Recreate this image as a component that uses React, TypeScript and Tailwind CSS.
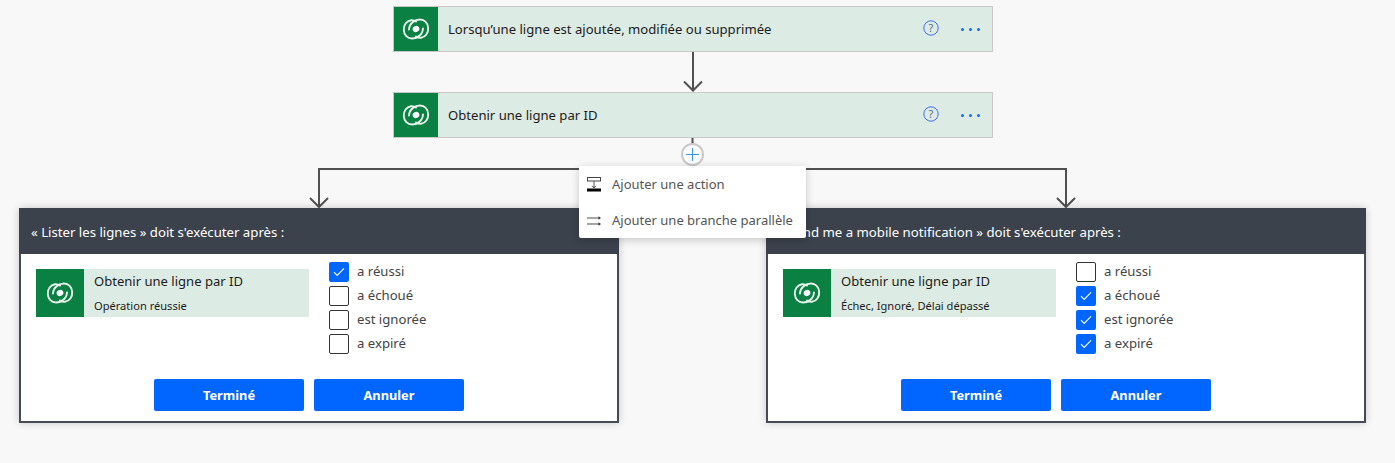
import React from "react";

const FONT = "font-['Noto_Sans','Open_Sans',sans-serif]";

function Logo() {
  return (
    <svg width="28" height="22" viewBox="0 0 28 22" fill="none">
      <path d="M14 3.600C12.500 2.400 10.800 2 9 2.200 4.500 2.800 1.500 7 1.800 12 2 17 5.500 20.500 10 20.500c4.500 0 10.500-3 11-10" stroke="#e6f4ea" strokeWidth="1.900" strokeLinecap="round" />
      <path d="M14 18.400c1.500 1.200 3.200 1.600 5 1.400 4.500-.6 7.500-4.800 7.200-9.800C26 5 22.500 1.500 18 1.500c-4.500 0-10.500 3-11 10" stroke="#e6f4ea" strokeWidth="1.900" strokeLinecap="round" />
      <ellipse cx="14" cy="11" rx="3.400" ry="3" transform="rotate(-25 14 11)" fill="#ffffff" />
    </svg>
  );
}

function FlowCard({ title }: { title: string }) {
  return (
    <div className="flex h-[46px] w-[600px] items-stretch border border-[#c8c8c8] bg-[#dcebe3]">
      <div className="flex w-[44px] items-center justify-center bg-[#0a8043]">
        <Logo />
      </div>
      <div className="flex-1 pl-[10px] text-[13.1px] leading-[44px] text-[#1c1c1c]">{title}</div>
      <svg className="mt-[12px] mr-[21px]" width="18" height="18" viewBox="0 0 18 18" fill="none">
        <circle cx="9" cy="9" r="7.200" stroke="#3f6ff0" strokeWidth="1" />
        <text x="9" y="13" textAnchor="middle" fontSize="11" fill="#5a6a9a" fontFamily="Noto Sans">?</text>
      </svg>
      <div className="mr-[12px] flex items-center gap-[5px]">
        <span className="h-[3px] w-[3px] rounded-full bg-[#0a6fe0]" />
        <span className="h-[3px] w-[3px] rounded-full bg-[#0a6fe0]" />
        <span className="h-[3px] w-[3px] rounded-full bg-[#0a6fe0]" />
      </div>
    </div>
  );
}

function Check({ checked, label }: { checked: boolean; label: string }) {
  return (
    <div className="flex h-[24px] items-center gap-[8px]">
      <div
        className={
          checked
            ? "flex h-[20px] w-[20px] items-center justify-center rounded-[2px] bg-[#0066ff]"
            : "h-[20px] w-[20px] rounded-[2px] border border-[#333333] bg-white"
        }
      >
        {checked && (
          <svg width="12" height="10" viewBox="0 0 12 10" fill="none">
            <path d="M1 5.200 4.200 8.400 11 1.400" stroke="#ffffff" strokeWidth="1.100" />
          </svg>
        )}
      </div>
      <span className="text-[13.15px] text-[#444444]">{label}</span>
    </div>
  );
}

function Panel({ title, sub, states }: { title: React.ReactNode; sub: string; states: boolean[] }) {
  const labels = ["a réussi", "a échoué", "est ignorée", "a expiré"];
  return (
    <div className="h-[215px] w-[600px] border-2 border-t-0 border-[#444b54] bg-white shadow-[0_0_8px_rgba(0,0,0,0.2)]">
      <div className="-mx-[2px] h-[46px] bg-[#3b424c] pl-[12px] text-[13.2px] leading-[49px] text-white">{title}</div>
      <div className="flex pl-[15px] pt-[6px]">
        <div className="mt-[9px] flex h-[48px] w-[273px] bg-[#dcebe3]">
          <div className="flex w-[48px] items-center justify-center bg-[#0a8043]">
            <Logo />
          </div>
          <div className="pl-[10px] pt-[2px] text-[#1c1c1c]">
            <div className="text-[13.05px] leading-[20px]">Obtenir une ligne par ID</div>
            <div className="mt-[7px] text-[11.1px] leading-[16px]">{sub}</div>
          </div>
        </div>
        <div className="ml-[20px]">
          {labels.map((l, i) => (
            <Check key={l} label={l} checked={states[i]} />
          ))}
        </div>
      </div>
      <div className="ml-[133px] mt-[23px] flex gap-[10px]">
        <button className="h-[32px] w-[150px] rounded-[2px] bg-[#0066ff] pt-[1px] text-[12.8px] font-bold text-white">Terminé</button>
        <button className="h-[32px] w-[150px] rounded-[2px] bg-[#0066ff] pt-[1px] text-[12.8px] font-bold text-white">Annuler</button>
      </div>
    </div>
  );
}

export default function App() {
  return (
    <div className={`${FONT} relative h-[463px] w-[1395px] overflow-hidden bg-[#f8f8f8] pt-[6px]`}>
      <div className="flex flex-col items-center pr-[9px]">
        <FlowCard title="Lorsqu’une ligne est ajoutée, modifiée ou supprimée" />
        <svg className="mr-[1px]" width="22" height="40" viewBox="0 0 22 40" fill="none">
          <path d="M11 0V38M2 29.500l9 9 9-9" stroke="#505050" strokeWidth="2" />
        </svg>
        <FlowCard title="Obtenir une ligne par ID" />
      </div>
      <svg className="block" width="1395" height="70" viewBox="0 0 1395 70" fill="none">
        <path d="M692.500 0V20" stroke="#505050" strokeWidth="2" />
        <path d="M319 69V31H1066V69M310 60l9 9 9-9M1057 60l9 9 9-9" stroke="#505050" strokeWidth="2" />
      </svg>
      <div className="flex gap-[147px] pl-[19px]">
        <Panel title="« Lister les lignes » doit s'exécuter après :" sub="Opération réussie" states={[true, false, false, false]} />
        <Panel title="« Send me a mobile notification » doit s'exécuter après :" sub="Échec, Ignoré, Délai dépassé" states={[false, true, true, true]} />
      </div>
      <button className="absolute left-[681px] top-[143px] flex h-[23px] w-[23px] items-center justify-center rounded-full border-2 border-[#c8c8c8] bg-white">
        <svg width="13" height="13" viewBox="0 0 13 13" fill="none">
          <path d="M6.500 0v13M0 6.500h13" stroke="#3a96dd" strokeWidth="1" />
        </svg>
      </button>
      <div className="absolute left-[579px] top-[166px] h-[72px] w-[227px] rounded-[2px] bg-white text-[13px] text-[#555555] shadow-[0_2px_8px_rgba(0,0,0,0.2)]">
        <div className="flex h-[36px] items-center pl-[8px] pt-[2px]">
          <svg width="14" height="16" viewBox="0 0 14 16" fill="none">
            <rect x="0.500" y="0.500" width="13" height="3.500" fill="#ffffff" stroke="#444444" strokeWidth="1" />
            <path d="M7 4v7M5 8.800 7 11l2-2.200" stroke="#555555" strokeWidth="1" />
            <rect x="0" y="11.500" width="14" height="3" fill="#000000" />
          </svg>
          <span className="ml-[11px]">Ajouter une action</span>
        </div>
        <div className="flex h-[36px] items-center pl-[8px] pt-[2px]">
          <svg width="14" height="10" viewBox="0 0 14 10" fill="none">
            <path d="M0 2h12M0 8h12" stroke="#888888" strokeWidth="1.600" />
            <path d="M11.500 .2 14 2l-2.500 1.800zM11.500 6.200 14 8l-2.500 1.800z" fill="#333333" />
          </svg>
          <span className="ml-[11px]">Ajouter une branche parallèle</span>
        </div>
      </div>
    </div>
  );
}
